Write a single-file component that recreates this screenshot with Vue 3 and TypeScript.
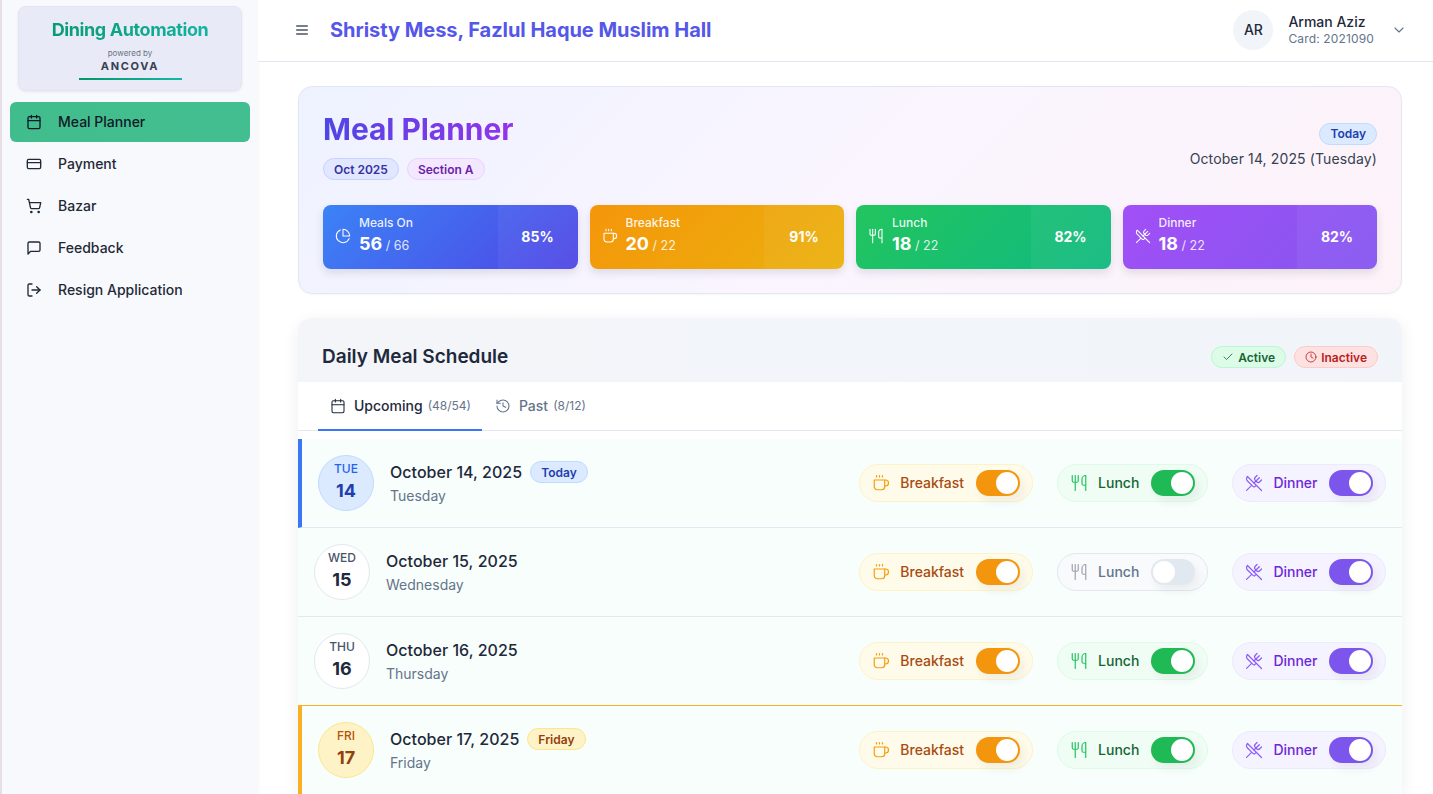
<template>
  <div class="app">
    <aside class="sidebar">
      <div class="brand">
        <div class="brand-title">Dining Automation</div>
        <div class="brand-by">powered by</div>
        <div class="brand-name">ANCOVA</div>
        <div class="brand-line"></div>
      </div>
      <nav class="nav">
        <a v-for="item in navItems" :key="item.label" class="nav-item" :class="{ active: item.active }">
          <svg class="icon nav-icon" viewBox="0 0 24 24" v-html="icons[item.icon]"></svg>
          <span>{{ item.label }}</span>
        </a>
      </nav>
    </aside>

    <div class="main">
      <header class="topbar">
        <div class="topbar-left">
          <svg class="icon menu-icon" viewBox="0 0 24 24" v-html="icons.menu"></svg>
          <h1 class="mess-name">Shristy Mess, Fazlul Haque Muslim Hall</h1>
        </div>
        <div class="user">
          <div class="avatar">AR</div>
          <div class="user-text">
            <div class="user-name">Arman Aziz</div>
            <div class="user-card">Card: 2021090</div>
          </div>
          <svg class="icon chevron" viewBox="0 0 24 24" v-html="icons.chevron"></svg>
        </div>
      </header>

      <main class="content">
        <section class="hero">
          <div class="hero-top">
            <div>
              <h2 class="hero-title">Meal Planner</h2>
              <div class="chips">
                <span class="chip chip-blue">Oct 2025</span>
                <span class="chip chip-purple">Section A</span>
              </div>
            </div>
            <div class="hero-date">
              <span class="chip chip-today">Today</span>
              <div class="hero-date-text">October 14, 2025 (Tuesday)</div>
            </div>
          </div>
          <div class="stats">
            <div v-for="s in stats" :key="s.label" class="stat" :data-tone="s.tone">
              <div class="stat-main">
                <svg class="icon stat-icon" viewBox="0 0 24 24" v-html="icons[s.icon]"></svg>
                <div>
                  <div class="stat-label">{{ s.label }}</div>
                  <div class="stat-value"><b>{{ s.value }}</b> / {{ s.total }}</div>
                </div>
              </div>
              <div class="stat-pct">{{ s.pct }}%</div>
            </div>
          </div>
        </section>

        <section class="schedule">
          <div class="schedule-head">
            <h3>Daily Meal Schedule</h3>
            <div class="legend">
              <span class="legend-chip legend-on">
                <svg class="icon" viewBox="0 0 24 24" v-html="icons.check"></svg>Active
              </span>
              <span class="legend-chip legend-off">
                <svg class="icon" viewBox="0 0 24 24" v-html="icons.clock"></svg>Inactive
              </span>
            </div>
          </div>
          <div class="tabs">
            <div class="tab active">
              <svg class="icon" viewBox="0 0 24 24" v-html="icons.calendar"></svg>
              <span>Upcoming</span><small>(48/54)</small>
            </div>
            <div class="tab">
              <svg class="icon" viewBox="0 0 24 24" v-html="icons.history"></svg>
              <span>Past</span><small>(8/12)</small>
            </div>
          </div>
          <div class="rows">
            <div v-for="d in days" :key="d.num" class="row" :data-kind="d.kind">
              <div class="date-circle">
                <span class="dow">{{ d.dow }}</span>
                <span class="num">{{ d.num }}</span>
              </div>
              <div class="date-text">
                <div class="date-line">
                  {{ d.date }}
                  <span v-if="d.badge" class="day-badge">{{ d.badge }}</span>
                </div>
                <div class="date-sub">{{ d.weekday }}</div>
              </div>
              <div class="meals">
                <div v-for="m in meals" :key="m.key" class="pill" :data-meal="m.key" :data-on="d[m.key]">
                  <svg class="icon pill-icon" viewBox="0 0 24 24" v-html="icons[m.icon]"></svg>
                  <span class="pill-label">{{ m.label }}</span>
                  <span class="switch"><span class="knob"></span></span>
                </div>
              </div>
            </div>
          </div>
        </section>
      </main>
    </div>
  </div>
</template>

<script setup lang="ts">
const icons: Record<string, string> = {
  calendar: '<path d="M8 2v4M16 2v4"/><rect x="3" y="4" width="18" height="18" rx="2"/><path d="M3 10h18"/>',
  card: '<rect x="2" y="5" width="20" height="14" rx="2"/><path d="M2 10h20"/>',
  cart: '<circle cx="8" cy="21" r="1"/><circle cx="19" cy="21" r="1"/><path d="M2.05 2.05h2l2.66 12.42a2 2 0 0 0 2 1.58h9.78a2 2 0 0 0 1.95-1.57l1.65-7.43H5.12"/>',
  message: '<path d="M21 15a2 2 0 0 1-2 2H7l-4 4V5a2 2 0 0 1 2-2h14a2 2 0 0 1 2 2z"/>',
  logout: '<path d="M9 21H5a2 2 0 0 1-2-2V5a2 2 0 0 1 2-2h4"/><path d="m16 17 5-5-5-5"/><path d="M21 12H9"/>',
  menu: '<path d="M4 6h16M4 12h16M4 18h16"/>',
  chevron: '<path d="m6 9 6 6 6-6"/>',
  pie: '<path d="M21.21 15.89A10 10 0 1 1 8 2.83"/><path d="M22 12A10 10 0 0 0 12 2v10z"/>',
  coffee: '<path d="M17 8h1a4 4 0 1 1 0 8h-1"/><path d="M3 8h14v9a4 4 0 0 1-4 4H7a4 4 0 0 1-4-4Z"/><path d="M6 2v2M10 2v2M14 2v2"/>',
  utensils: '<path d="M3 2v7c0 1.1.9 2 2 2h4a2 2 0 0 0 2-2V2"/><path d="M7 2v20"/><path d="M21 15V2a5 5 0 0 0-5 5v6c0 1.1.9 2 2 2h3Zm0 0v7"/>',
  crossed: '<path d="m16 2-2.3 2.3a3 3 0 0 0 0 4.2l1.8 1.8a3 3 0 0 0 4.2 0L22 8"/><path d="M15 15 3.3 3.3a4.2 4.2 0 0 0 0 6l7.3 7.3c.7.7 2 .7 2.8 0L15 15Zm0 0 7 7"/><path d="m2.1 21.8 6.4-6.3"/><path d="m19 5-7 7"/>',
  check: '<path d="M20 6 9 17l-5-5"/>',
  clock: '<circle cx="12" cy="12" r="10"/><path d="M12 6v6l4 2"/>',
  history: '<path d="M3 12a9 9 0 1 0 9-9 9.75 9.75 0 0 0-6.74 2.74L3 8"/><path d="M3 3v5h5"/><path d="M12 7v5l4 2"/>',
}

const navItems = [
  { label: 'Meal Planner', icon: 'calendar', active: true },
  { label: 'Payment', icon: 'card' },
  { label: 'Bazar', icon: 'cart' },
  { label: 'Feedback', icon: 'message' },
  { label: 'Resign Application', icon: 'logout' },
]

const stats = [
  { label: 'Meals On', value: 56, total: 66, pct: 85, icon: 'pie', tone: 'blue' },
  { label: 'Breakfast', value: 20, total: 22, pct: 91, icon: 'coffee', tone: 'amber' },
  { label: 'Lunch', value: 18, total: 22, pct: 82, icon: 'utensils', tone: 'green' },
  { label: 'Dinner', value: 18, total: 22, pct: 82, icon: 'crossed', tone: 'purple' },
]

const meals = [
  { key: 'breakfast', label: 'Breakfast', icon: 'coffee' },
  { key: 'lunch', label: 'Lunch', icon: 'utensils' },
  { key: 'dinner', label: 'Dinner', icon: 'crossed' },
] as const

const days = [
  { dow: 'TUE', num: 14, date: 'October 14, 2025', weekday: 'Tuesday', badge: 'Today', kind: 'today', breakfast: true, lunch: true, dinner: true },
  { dow: 'WED', num: 15, date: 'October 15, 2025', weekday: 'Wednesday', badge: '', kind: 'plain', breakfast: true, lunch: false, dinner: true },
  { dow: 'THU', num: 16, date: 'October 16, 2025', weekday: 'Thursday', badge: '', kind: 'plain', breakfast: true, lunch: true, dinner: true },
  { dow: 'FRI', num: 17, date: 'October 17, 2025', weekday: 'Friday', badge: 'Friday', kind: 'friday', breakfast: true, lunch: true, dinner: true },
]
</script>

<style>
html, body { margin: 0; height: 100%; overflow: hidden; background: #fff; }
</style>

<style scoped>
* { box-sizing: border-box; }
.app {
  display: flex;
  height: 794px;
  overflow: hidden;
  font-family: Inter, "Liberation Sans", sans-serif;
  color: #1e293b;
  background: #fff;
  border-left: 2px solid #e8dfe6;
}
.icon { fill: none; stroke: currentColor; stroke-width: 2; stroke-linecap: round; stroke-linejoin: round; flex: none; }

.sidebar { width: 256px; flex: none; background: #f8f9fc; padding: 6px 8px 0; box-shadow: 1px 0 3px rgba(30, 41, 59, 0.04); }
.brand {
  width: 224px;
  height: 85px;
  margin: 0 8px;
  padding-top: 12px;
  border: 1px solid #e2e5f3;
  border-radius: 8px;
  background: #e8eaf8;
  box-shadow: 0 1px 3px rgba(30, 41, 59, 0.08);
  text-align: center;
}
.brand-title {
  font-size: 18px;
  line-height: 22px;
  font-weight: 700;
  letter-spacing: -0.4px;
  background: linear-gradient(90deg, #059669, #14b8a6);
  -webkit-background-clip: text;
  background-clip: text;
  color: transparent;
}
.brand-by { margin-top: 7px; font-size: 8px; line-height: 10px; color: #6b7280; }
.brand-name { margin-top: 1px; font-size: 11px; line-height: 14px; font-weight: 700; letter-spacing: 1.7px; color: #374151; }
.brand-line { width: 103px; height: 2px; margin: 5px auto 0; background: linear-gradient(90deg, #059669, #14b8a6); }

.nav { display: flex; flex-direction: column; gap: 2px; margin-top: 11px; }
.nav-item {
  display: flex;
  align-items: center;
  gap: 16px;
  width: 240px;
  height: 40px;
  padding: 0 16px;
  border-radius: 6px;
  font-size: 14px;
  font-weight: 500;
  color: #1f2937;
}
.nav-item span { padding-bottom: 1px; }
.nav-item.active { background: linear-gradient(90deg, #41bd8d, #43be90); color: #111827; }
.nav-icon { width: 16px; height: 16px; }

.main { flex: 1; min-width: 0; }
.topbar {
  height: 62px;
  display: flex;
  align-items: center;
  justify-content: space-between;
  padding: 0 26px 2px 36px;
  border-bottom: 1px solid #e2e5ee;
  background: #fff;
}
.topbar-left { display: flex; align-items: center; gap: 20px; }
.menu-icon { width: 16px; height: 16px; color: #4b5563; }
.mess-name { margin: 0; font-size: 20px; line-height: 28px; font-weight: 700; letter-spacing: -0.04px; color: #5457e8; }
.user { display: flex; align-items: center; gap: 15px; }
.avatar {
  width: 40px;
  height: 40px;
  border-radius: 50%;
  background: #f1f5f9;
  display: grid;
  place-items: center;
  font-size: 14px;
  font-weight: 500;
  color: #1e293b;
}
.user-text { line-height: 17px; margin-right: 2px; }
.user-name { font-size: 14px; font-weight: 500; color: #1e293b; }
.user-card { font-size: 12px; letter-spacing: 0.15px; color: #64748b; }
.chevron { width: 16px; height: 16px; color: #64748b; stroke-width: 1.7; }

.content { padding: 24px 31px 0 40px; }
.hero {
  height: 208px;
  padding: 24px 24px 0;
  border: 1px solid #e2e8f0;
  border-radius: 14px;
  background: linear-gradient(135deg, #eef2ff 0%, #faf5ff 50%, #fdf2f8 100%);
  box-shadow: 0 1px 2px rgba(30, 41, 59, 0.04);
}
.hero-top { display: flex; justify-content: space-between; height: 94px; }
.hero-title {
  margin: 0;
  font-size: 30px;
  line-height: 36px;
  font-weight: 700;
  letter-spacing: -0.07px;
  background: linear-gradient(90deg, #4f46e5, #9333ea);
  -webkit-background-clip: text;
  background-clip: text;
  color: transparent;
  width: fit-content;
}
.chips { display: flex; gap: 8px; margin-top: 11px; }
.chip {
  height: 22px;
  padding: 0 10px;
  display: inline-flex;
  align-items: center;
  border-radius: 11px;
  font-size: 12px;
  font-weight: 600;
  border: 1px solid;
}
.chip-blue { background: #e0e7ff; border-color: #c7d2fe; color: #3730a3; }
.chip-purple { background: #f3e8ff; border-color: #e9d5ff; color: #6b21a8; }
.chip-today { background: #dbeafe; border-color: #bfdbfe; color: #1e40af; }
.hero-date { text-align: right; padding-top: 12px; margin-top: -1px; }
.hero-date-text { margin-top: 4px; font-size: 14px; line-height: 20px; letter-spacing: 0.12px; color: #374151; }

.stats { display: grid; grid-template-columns: repeat(4, 1fr); gap: 12px; }
.stat {
  height: 64px;
  display: flex;
  border-radius: 8px;
  overflow: hidden;
  color: #fff;
  box-shadow: 0 4px 8px rgba(30, 41, 59, 0.12);
}
.stat[data-tone='blue'] { background: linear-gradient(135deg, #3b82f6, #4f46e5); }
.stat[data-tone='amber'] { background: linear-gradient(135deg, #f5960b, #eab10c); }
.stat[data-tone='green'] { background: linear-gradient(135deg, #22c55e, #10b981); }
.stat[data-tone='purple'] { background: linear-gradient(135deg, #a24ff6, #8456f0); }
.stat-main { flex: 1; display: flex; align-items: center; gap: 8px; padding-left: 12px; }
.stat-icon { width: 16px; height: 16px; stroke-width: 1.6; margin-bottom: 2px; }
.stat-label { font-size: 12px; line-height: 16px; font-weight: 500; color: rgba(255, 255, 255, 0.9); margin-top: -2px; }
.stat-value { font-size: 12.5px; line-height: 24px; margin-top: 1px; color: rgba(255, 255, 255, 0.85); }
.stat-value b { font-size: 18px; font-weight: 700; color: #fff; }
.stat-pct {
  width: 80px;
  display: grid;
  place-items: center;
  font-size: 14px;
  font-weight: 700;
  padding-bottom: 1px;
  background: rgba(255, 255, 255, 0.05);
}

.schedule {
  margin-top: 24px;
  border-radius: 14px 14px 0 0;
  background: #fff;
  box-shadow: 0 4px 16px rgba(30, 41, 59, 0.08);
}
.schedule-head {
  height: 64px;
  display: flex;
  align-items: center;
  justify-content: space-between;
  padding: 21px 24px 8px;
  border-radius: 14px 14px 0 0;
  background: linear-gradient(90deg, #f3f5f9, #f1f5f9);
}
.schedule-head h3 { margin: 0; font-size: 19px; line-height: 28px; font-weight: 600; color: #1e293b; }
.legend { display: flex; gap: 8px; margin-top: 1px; }
.legend-chip {
  height: 22px;
  padding: 0 10px;
  display: inline-flex;
  align-items: center;
  gap: 4px;
  border-radius: 11px;
  border: 1px solid;
  font-size: 12px;
  font-weight: 600;
}
.legend-chip .icon { width: 12px; height: 12px; stroke-width: 1.6; }
.legend-on { background: #dcfce7; border-color: #bbf7d0; color: #166534; }
.legend-off { background: #fee2e2; border-color: #fecaca; color: #b91c1c; }

.tabs { height: 49px; display: flex; padding: 0 20px; border-bottom: 1px solid #e2e8f0; }
.tab {
  display: flex;
  align-items: center;
  gap: 8px;
  padding: 0 12px;
  margin-bottom: -1px;
  font-size: 14px;
  font-weight: 500;
  color: #64748b;
  border-bottom: 2px solid transparent;
}
.tab .icon { width: 16px; height: 16px; stroke-width: 1.6; }
.tab small { font-size: 12px; font-weight: 400; margin-left: -3px; color: #64748b; }
.tab.active { color: #1e293b; border-bottom-color: #3b76f6; padding-right: 11px; margin-right: 1px; }

.rows { padding-top: 8px; }
.row {
  height: 89px;
  display: flex;
  align-items: center;
  padding: 0 16px;
  background: #f8fefb;
  border-bottom: 1px solid #e2e8f0;
}
.row[data-kind='today'] { border-left: 4px solid #3b76f6; }
.row[data-kind='friday'] { border-left: 4px solid #fbb024; border-top: 1px solid #fbb024; margin-top: -1px; height: 89px; border-bottom: 0; }
.date-circle {
  width: 56px;
  height: 56px;
  flex: none;
  border-radius: 50%;
  border: 1px solid #e2e8f0;
  background: #fff;
  display: flex;
  flex-direction: column;
  align-items: center;
  justify-content: center;
  gap: 2px;
  padding-bottom: 2px;
  color: #1e293b;
}
.dow { font-size: 12px; line-height: 16px; font-weight: 500; color: #475569; }
.num { font-size: 18px; line-height: 24px; font-weight: 700; }
.row[data-kind='today'] .date-circle { background: #dbeafe; border-color: #bfdbfe; color: #1e40af; }
.row[data-kind='today'] .dow { color: #2563eb; }
.row[data-kind='friday'] .date-circle { background: #fef3c7; border-color: #fde68a; color: #92400e; }
.row[data-kind='friday'] .dow { color: #b45309; }
.date-text { margin-left: 16px; }
.date-line { display: flex; align-items: center; gap: 8px; height: 24px; font-size: 16px; font-weight: 500; letter-spacing: 0.03px; color: #1e293b; }
.date-sub { margin-top: 2px; font-size: 14px; line-height: 20px; color: #64748b; }
.day-badge { height: 22px; padding: 0 10px; display: inline-flex; align-items: center; border-radius: 11px; border: 1px solid; font-size: 12px; font-weight: 600; }
.row[data-kind='today'] .day-badge { background: #dbeafe; border-color: #bfdbfe; color: #1e40af; }
.row[data-kind='friday'] .day-badge { background: #fef3c7; border-color: #fde68a; color: #92400e; }

.meals { margin-left: auto; display: flex; gap: 24px; }
.pill {
  --tint: #f59e0b;
  --track: #f3950d;
  height: 38px;
  display: flex;
  align-items: center;
  padding: 0 12px;
  border-radius: 19px;
  border: 1px solid;
  font-size: 14px;
  font-weight: 500;
}
.pill-icon { width: 18px; height: 18px; stroke-width: 1.6; color: var(--tint); }
.pill-label { margin: 0 11.5px 0 10.5px; padding-bottom: 1px; }
.switch {
  position: relative;
  width: 44px;
  height: 26px;
  border-radius: 13px;
  background: var(--track);
  box-shadow: 4px 6px 10px rgba(30, 41, 59, 0.06);
}
.knob {
  position: absolute;
  top: 2px;
  right: 2px;
  width: 22px;
  height: 22px;
  border-radius: 50%;
  background: #fff;
}
.pill[data-meal='breakfast'] { background: #fffbeb; border-color: #fef3c7; color: #a84c10; }
.pill[data-meal='lunch'] { --tint: #22c55e; --track: #1fb955; background: #f0fdf4; border-color: #dcfce7; color: #166534; }
.pill[data-meal='dinner'] { --tint: #8b5cf6; --track: #7c56ec; background: #f5f3ff; border-color: #ede9fe; color: #6d28d9; }
.pill[data-on='false'] { background: #f8fafc; border-color: #e2e8f0; color: #64748b; }
.pill[data-on='false'] .pill-icon { color: #9ca3af; }
.pill[data-on='false'] .switch { background: #e2e8f0; }
.pill[data-on='false'] .knob { right: auto; left: 2px; }
</style>
